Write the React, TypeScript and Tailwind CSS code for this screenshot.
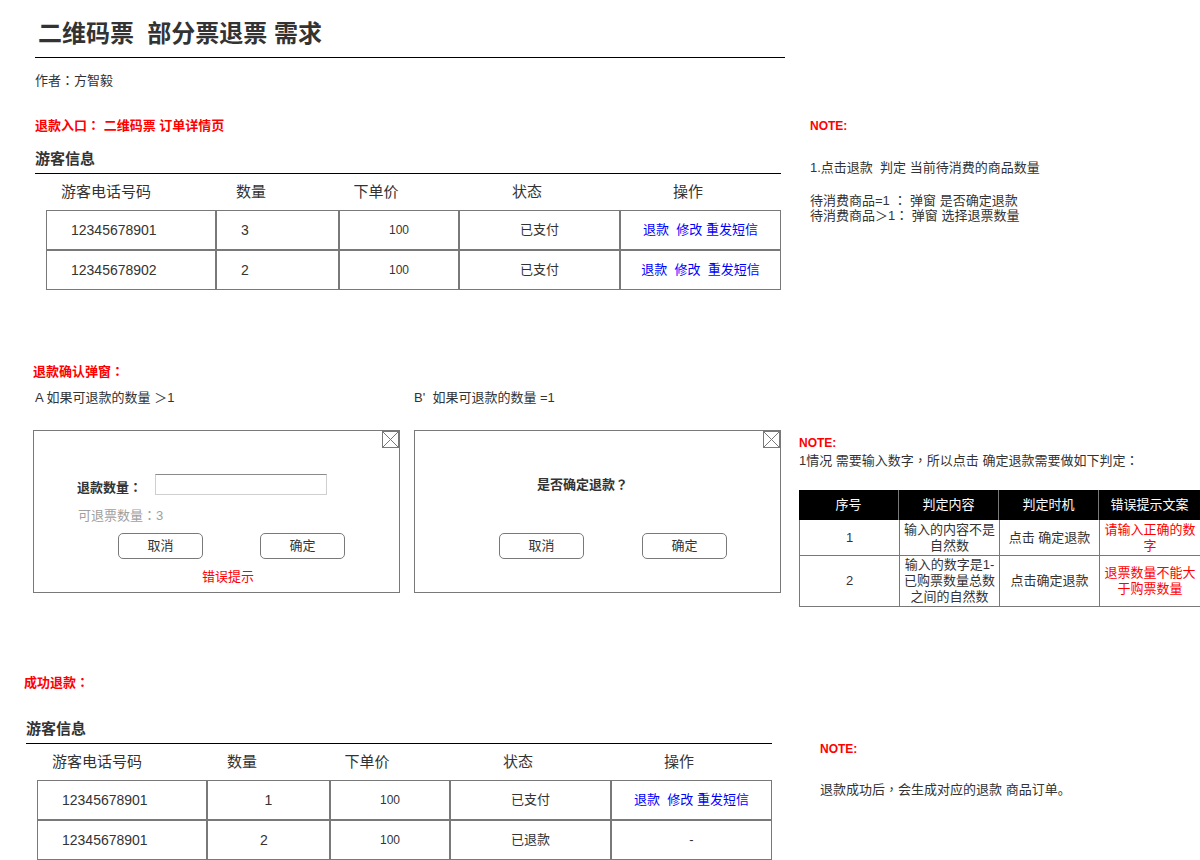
import React from 'react';

interface OrderRow {
  phone: string;
  qty: string;
  qtyClass: string;
  price: string;
  status: string;
  actions: string | null;
}

const firstRows: OrderRow[] = [
  { phone: '12345678901', qty: '3', qtyClass: 'justify-start pl-[24px]', price: '100', status: '已支付', actions: '退款  修改 重发短信' },
  { phone: '12345678902', qty: '2', qtyClass: 'justify-start pl-[24px]', price: '100', status: '已支付', actions: '退款  修改  重发短信' },
];

const doneRows: OrderRow[] = [
  { phone: '12345678901', qty: '1', qtyClass: 'justify-center', price: '100', status: '已支付', actions: '退款  修改 重发短信' },
  { phone: '12345678901', qty: '2', qtyClass: 'justify-center pr-[9px]', price: '100', status: '已退款', actions: null },
];

// full-width ：，？ sit centred in their box in the mockup, as the TC cut draws them
const T: React.FC<{ children: string }> = ({ children }) => (
  <>
    {children.split(/([：，？])/).map((part, i) =>
      /^[：，？]$/.test(part) ? (
        <span key={i} className="font-['Noto_Sans_CJK_TC',sans-serif] leading-[0]">{part}</span>
      ) : (
        <React.Fragment key={i}>{part}</React.Fragment>
      )
    )}
  </>
);

// guest info block: bold title, rule, loose header labels, then the bordered rows
const GuestInfo: React.FC<{ rows: OrderRow[] }> = ({ rows }) => (
  <div>
    <div className="w-[746px] border-b border-black pb-[5px] text-[15px] font-bold leading-[18px] text-[#333]">游客信息</div>
    <div className="mt-[8px] flex text-[15px] leading-[20px] text-[#333]">
      <div className="w-[142px] text-center">游客电话号码</div>
      <div className="w-[148px] text-center">数量</div>
      <div className="w-[102px] text-center">下单价</div>
      <div className="w-[200px] text-center">状态</div>
      <div className="w-[122px] text-center">操作</div>
    </div>
    <div className="ml-[11px] mt-[8px] w-[735px]">
      {rows.map((row, i) => (
        <div key={i} className="flex h-[40px] text-[#333]">
          <div className="flex w-[170px] items-center border border-[#797979] pl-[24px] text-[14px]">{row.phone}</div>
          <div className={`flex w-[123px] items-center border border-[#797979] text-[14px] ${row.qtyClass}`}>{row.qty}</div>
          <div className="flex w-[120px] items-center justify-center border border-[#797979] text-[12px]">{row.price}</div>
          <div className="flex w-[161px] items-center justify-center border border-[#797979] text-[13px]">{row.status}</div>
          <div className="flex w-[161px] items-center justify-center whitespace-pre border border-[#797979] text-[13px] text-[#0000ff]">
            {row.actions ?? <span className="text-[#333]">-</span>}
          </div>
        </div>
      ))}
    </div>
  </div>
);

const CloseBox = () => (
  <svg className="absolute right-0 top-0" width="17" height="17" viewBox="0 0 17 17">
    <rect x="0.5" y="0.5" width="16" height="16" fill="white" stroke="#797979" />
    <line x1="1" y1="1" x2="16" y2="16" stroke="#797979" strokeWidth="1" />
    <line x1="16" y1="1" x2="1" y2="16" stroke="#797979" strokeWidth="1" />
  </svg>
);

const Btn: React.FC<{ label: string }> = ({ label }) => (
  <button className="h-[26px] w-[85px] rounded-[5px] border border-[#797979] bg-white text-[13px] text-[#333]">{label}</button>
);

const Note = () => <div className="text-[12px] font-bold leading-[18px] text-[#ff0000]">NOTE:</div>;

const App: React.FC = () => {
  return (
    <div className="h-[860px] w-[1200px] overflow-hidden bg-white font-['Liberation_Sans','Noto_Sans_CJK_SC',sans-serif] text-[#333] [text-spacing-trim:space-all]">
      {/* entry + first table */}
      <div className="flex items-start">
        <div className="w-[810px] pl-[35px]">
          <div className="w-[750px] border-b border-black pb-[8px] pl-[3px] pt-[19px] text-[24px] font-bold leading-[30px] text-[#333] whitespace-pre">
            {'二维码票  部分票退票 需求'}
          </div>
          <div className="mt-[14px] h-[18px] text-[13px] leading-[18px]"><T>作者：方智毅</T></div>
          <div className="mt-[27px] h-[18px] whitespace-pre text-[13px] font-bold leading-[18px] text-[#ff0000]"><T>{'退款入口： 二维码票 订单详情页'}</T></div>
          <div className="mt-[15px]">
            <GuestInfo rows={firstRows} />
          </div>
        </div>
        <div className="pt-[117px] text-[13px] text-[#333]">
          <Note />
          <div className="mt-[24px] whitespace-pre leading-[18px]">{'1.点击退款  判定 当前待消费的商品数量'}</div>
          <div className="mt-[16px] whitespace-pre leading-[15px]">
            <div className="h-[15px]"><T>{'待消费商品=1 ： 弹窗 是否确定退款'}</T></div>
            <div className="h-[15px]"><T>{'待消费商品＞1： 弹窗 选择退票数量'}</T></div>
          </div>
        </div>
      </div>

      {/* confirm dialogs */}
      <div className="mt-[73px] flex items-start">
        <div className="w-[800px] pl-[33px]">
          <div className="h-[18px] text-[13px] font-bold leading-[18px] text-[#ff0000]"><T>退款确认弹窗：</T></div>
          <div className="mt-[8px] flex whitespace-pre text-[13px] leading-[18px]">
            <div className="w-[381px] pl-[2px]">{'A 如果可退款的数量 ＞1'}</div>
            <div>{"B'  如果可退款的数量 =1"}</div>
          </div>
          <div className="mt-[23px] flex gap-[14px]">
            <div className="relative h-[163px] w-[367px] border border-[#797979] pl-[43px] pt-[43px]">
              <CloseBox />
              <div className="flex items-start">
                <div className="mt-[5px] h-[18px] w-[78px] text-[13px] font-bold leading-[18px]"><T>退款数量：</T></div>
                <div className="h-[21px] w-[172px] border border-[#cfcfcf] border-t-[#8a8a8a] bg-white" />
              </div>
              <div className="ml-[1px] mt-[10px] h-[18px] text-[13px] leading-[18px] text-[#a0a0a0]"><T>可退票数量：3</T></div>
              <div className="ml-[41px] mt-[8px] flex gap-[57px]">
                <Btn label="取消" />
                <Btn label="确定" />
              </div>
              <div className="ml-[125px] mt-[9px] text-[13px] leading-[18px] text-[#ff0000]">错误提示</div>
            </div>
            <div className="relative h-[163px] w-[367px] border border-[#797979] pl-[43px] pt-[45px]">
              <CloseBox />
              <div className="ml-[79px] h-[18px] text-[13px] font-bold leading-[18px]"><T>是否确定退款？</T></div>
              <div className="ml-[41px] mt-[39px] flex gap-[58px]">
                <Btn label="取消" />
                <Btn label="确定" />
              </div>
            </div>
          </div>
        </div>
        <div className="pt-[71px] text-[13px]">
          <Note />
          <div className="h-[18px] leading-[18px]"><T>1情况 需要输入数字，所以点击 确定退款需要做如下判定：</T></div>
          <div className="mt-[20px] w-[401px] text-[13px] leading-[16px]">
            <div className="grid h-[30px] grid-cols-[100px_100px_100px_101px] bg-black text-white">
              <div className="flex items-center justify-center border-r border-[#797979]">序号</div>
              <div className="flex items-center justify-center border-r border-[#797979]">判定内容</div>
              <div className="flex items-center justify-center border-r border-[#797979]">判定时机</div>
              <div className="flex items-center justify-center">错误提示文案</div>
            </div>
            <div className="grid h-[36px] grid-cols-[100px_100px_100px_101px] border-l border-[#797979] text-[#333]">
              <div className="flex items-center justify-center border-b border-r border-[#797979]">1</div>
              <div className="flex items-center justify-center border-b border-r border-[#797979] text-center">输入的内容不是<br />自然数</div>
              <div className="flex items-center justify-center border-b border-r border-[#797979] whitespace-pre">{'点击 确定退款'}</div>
              <div className="flex items-center justify-center border-b border-r border-[#797979] text-center text-[#ff0000]">请输入正确的数<br />字</div>
            </div>
            <div className="grid h-[51px] grid-cols-[100px_100px_100px_101px] border-l border-[#797979] text-[#333]">
              <div className="flex items-center justify-center border-b border-r border-[#797979]">2</div>
              <div className="flex items-center justify-center border-b border-r border-[#797979] text-center">输入的数字是1-<br />已购票数量总数<br />之间的自然数</div>
              <div className="flex items-center justify-center border-b border-r border-[#797979]">点击确定退款</div>
              <div className="flex items-center justify-center border-b border-r border-[#797979] text-center text-[#ff0000]">退票数量不能大<br />于购票数量</div>
            </div>
          </div>
        </div>
      </div>

      {/* refund done */}
      <div className="mt-[67px] flex items-start">
        <div className="w-[820px] pl-[24px]">
          <div className="h-[18px] text-[13px] font-bold leading-[18px] text-[#ff0000]"><T>成功退款：</T></div>
          <div className="ml-[2px] mt-[28px]">
            <GuestInfo rows={doneRows} />
          </div>
        </div>
        <div className="pt-[66px] text-[13px]">
          <Note />
          <div className="mt-[23px] h-[18px] whitespace-pre leading-[18px]"><T>{'退款成功后，会生成对应的退款 商品订单。'}</T></div>
        </div>
      </div>
    </div>
  );
};

export default App;
